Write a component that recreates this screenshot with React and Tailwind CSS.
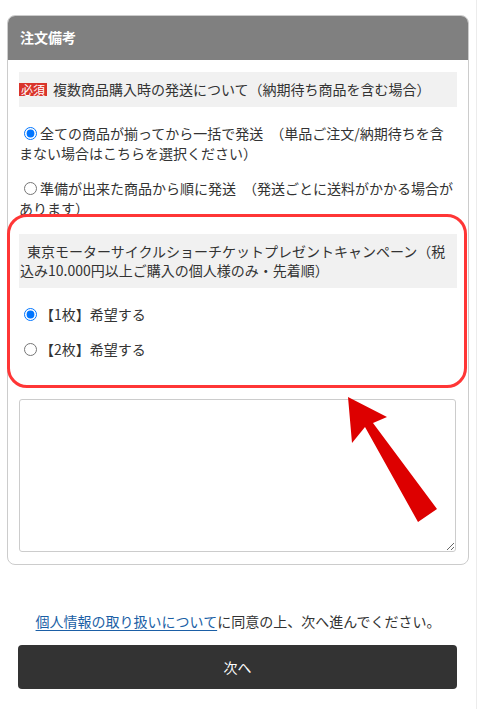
import React from 'react';

function Radio({ name, checked, children }) {
  return (
    <label className="block leading-[20px]">
      <input
        type="radio"
        name={name}
        defaultChecked={checked}
        className="ml-[5px] mr-[3px] align-[-1px] w-[13px] h-[13px] accent-[#0075ff]"
      />
      {children}
    </label>
  );
}

export default function App() {
  return (
    <div className="relative w-[477px] min-h-[709px] bg-white border-r border-[#ececec] font-['Noto_Sans_CJK_JP',sans-serif] text-[14px] text-[#333]">
      <div className="pt-[15px] pl-[7px]">
        {/* Card */}
        <div className="w-[462px] border border-[#cccccc] rounded-[8px] overflow-hidden">
          <div className="h-[44px] bg-[#808080] flex items-center pl-[12px] pb-[2px] text-white font-bold text-[14px]">
            注文備考
          </div>
          <div className="pl-[11px] pr-[11px] pt-[12px] pb-[12px]">
            <div className="h-[35px] bg-[#f1f1f1] flex items-center">
              <span className="h-[13px] w-[28px] mr-[6px] bg-[#d9342b] text-white text-[12px] leading-[13px] text-center">
                必須
              </span>
              <span>複数商品購入時の発送について（納期待ち商品を含む場合）</span>
            </div>

            <div className="mt-[16px]">
              <Radio name="ship" checked>
                全ての商品が揃ってから一括で発送&ensp;（単品ご注文/納期待ちを含まない場合はこちらを選択ください）
              </Radio>
            </div>
            <div className="mt-[15px]">
              <Radio name="ship">
                準備が出来た商品から順に発送&ensp;（発送ごとに送料がかかる場合があります）
              </Radio>
            </div>

            <div className="mt-[16px] bg-[#f1f1f1] py-[8px] pl-[1px] leading-[19px] indent-[7px]">
              東京モーターサイクルショーチケットプレゼントキャンペーン（税込み10.000円以上ご購入の個人様のみ・先着順）
            </div>

            <div className="mt-[16px]">
              <Radio name="ticket" checked>
                【1枚】希望する
              </Radio>
            </div>
            <div className="mt-[15px]">
              <Radio name="ticket">
                【2枚】希望する
              </Radio>
            </div>

            <textarea className="block mt-[40px] w-[437px] h-[153px] border border-[#cccccc] rounded-[3px] resize-y" />
          </div>
        </div>
      </div>

      {/* Footer */}
      <p className="mt-[46px] text-center leading-[20px]">
        <a href="#" className="text-[#1b5fa6] underline underline-offset-[3px]">
          個人情報の取り扱いについて
        </a>
        に同意の上、次へ進んでください。
      </p>
      <button className="block mt-[14px] ml-[18px] w-[439px] h-[44px] rounded-[4px] bg-[#333333] text-white text-[14px]">
        次へ
      </button>

      {/* annotation overlay */}
      <div className="absolute left-[7px] top-[214px] w-[460px] h-[174px] border-[3px] border-[#ff3636] rounded-[20px] pointer-events-none" />
      <svg className="absolute left-0 top-0 pointer-events-none" width="480" height="709">
        <polygon
          points="348,397 387,417 373,423 437,509 418,522 365,427 352,443"
          fill="#dd0000"
        />
      </svg>
    </div>
  );
}
